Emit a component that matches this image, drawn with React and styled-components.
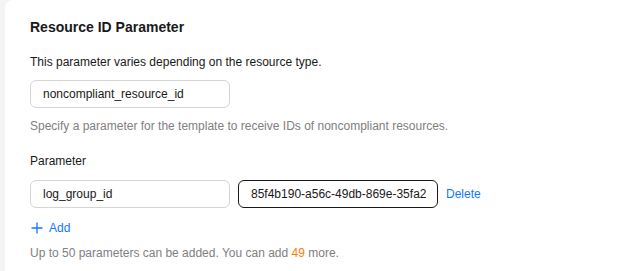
import React from "react";
import styled, { createGlobalStyle } from "styled-components";

const GlobalStyle = createGlobalStyle`
  html, body {
    margin: 0;
    padding: 0;
    background: #f4f4f4;
    font-family: "Liberation Sans", Arial, sans-serif;
  }
`;

const Page = styled.div`
  display: flex;
  padding-left: 5px;
  height: 271px;
  overflow: hidden;
`;

const Card = styled.div`
  flex: 1;
  background: #fff;
  border-top-left-radius: 8px;
  padding: 17px 0 0 25px;
  color: #191919;
`;

const Title = styled.h2`
  margin: 0;
  font-size: 14px;
  line-height: 20px;
  font-weight: 700;
`;

const Text = styled.p`
  margin: ${(p) => p.$mt || 0}px 0 0;
  font-size: 12px;
  line-height: 18px;
  color: ${(p) => (p.$muted ? "#808080" : "#191919")};
`;

const Row = styled.div`
  display: flex;
  align-items: center;
  gap: 8px;
  margin-top: ${(p) => p.$mt || 0}px;
`;

const Input = styled.div`
  box-sizing: border-box;
  width: 200px;
  height: 28px;
  padding: 0 12px;
  display: flex;
  align-items: center;
  border: 1px solid ${(p) => (p.$focus ? "#191919" : "#d4d4d4")};
  border-radius: 6px;
  font-size: 12px;
  color: #191919;
  white-space: nowrap;
  overflow: hidden;
`;

const LinkButton = styled.span`
  color: #1476ff;
  font-size: 12px;
  line-height: 18px;
  display: inline-flex;
  align-items: center;
  gap: 6px;
  cursor: pointer;
`;

const AddRow = styled.div`
  margin-top: 11px;
  display: flex;
  padding-left: 1px;
`;

const Count = styled.span`
  color: #ff7d00;
`;

export default function App() {
  return (
    <>
      <GlobalStyle />
      <Page>
        <Card>
          <Title>Resource ID Parameter</Title>
          <Text $mt={16}>This parameter varies depending on the resource type.</Text>
          <Row $mt={9}>
            <Input>noncompliant_resource_id</Input>
          </Row>
          <Text $mt={9} $muted>
            Specify a parameter for the template to receive IDs of noncompliant resources.
          </Text>
          <Text $mt={17}>Parameter</Text>
          <Row $mt={10}>
            <Input>log_group_id</Input>
            <Input $focus>85f4b190-a56c-49db-869e-35fa2</Input>
            <LinkButton>Delete</LinkButton>
          </Row>
          <AddRow>
            <LinkButton>
              <svg width="12" height="12" viewBox="0 0 12 12">
                <path d="M6 0.5v11M0.5 6h11" stroke="#1476ff" strokeWidth="1.3" fill="none" />
              </svg>
              Add
            </LinkButton>
          </AddRow>
          <Text $mt={7} $muted>
            Up to 50 parameters can be added. You can add <Count>49</Count> more.
          </Text>
        </Card>
      </Page>
    </>
  );
}
